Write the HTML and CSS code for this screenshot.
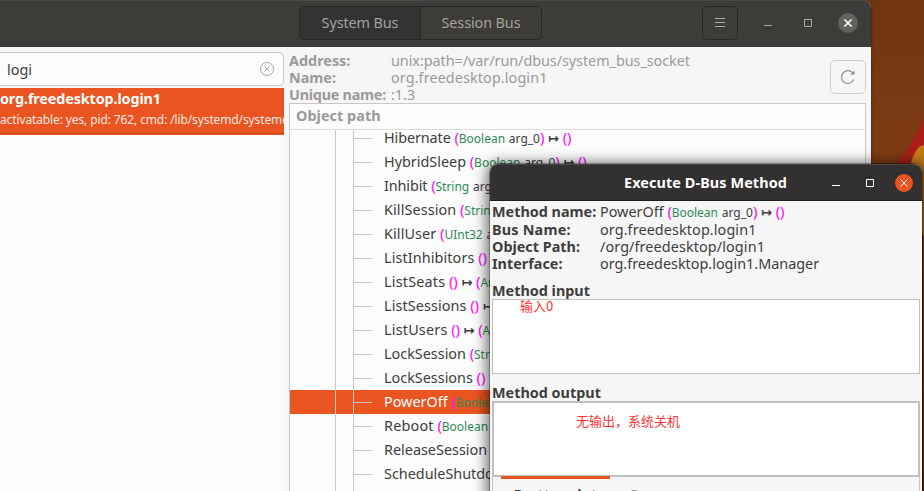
FILE: index.html
```html
<!DOCTYPE html>
<html lang="en">
<head>
<meta charset="utf-8">
<title>D-Feet</title>
<link rel="stylesheet" href="styles.css">
</head>
<body>
<svg class="wallpaper" viewBox="0 0 64 491" width="64" height="491">
  <path class="flame-red" d="M64 118C57 135 49 149 36 164L40 180H64Z"/>
  <path class="flame-gold" d="M64 145C57 146 54 153 51 163L49 176H64Z"/>
  <path class="flame-gap" d="M50 153L46 164H50Z"/>
  <path class="flame-gold" d="M62 160H64V235H62Z"/>
</svg>
<main class="window">
  <header class="titlebar">
    <div class="switcher"><span class="tab active">System Bus</span><span class="tab">Session Bus</span></div>
    <div class="controls">
      <span class="menu"><svg width="12" height="12"><path d="M1 1.5H11M1 5.5H11M1 9.5H11"/></svg></span>
      <svg class="min" width="10" height="10"><path d="M1 7.5H9"/></svg>
      <svg class="max" width="10" height="10"><path d="M1.5 1.5H8.5V8.5H1.5Z"/></svg>
      <span class="close"><svg width="10" height="10"><path d="M1.5 1.5L8.5 8.5M8.5 1.5L1.5 8.5"/></svg></span>
    </div>
  </header>
  <div class="content">
    <aside class="sidebar">
      <div class="search"><span>logi</span><svg width="16" height="16"><circle cx="8" cy="8" r="6.5"/><path d="M5.5 5.5L10.5 10.5M10.5 5.5L5.5 10.5"/></svg></div>
      <div class="service"><b>org.freedesktop.login1</b><small>activatable: yes, pid: 762, cmd: /lib/systemd/systemd</small></div>
      <div class="empty"></div>
    </aside>
    <section class="details">
      <div class="summary">
        <dl>
          <dt>Address:</dt><dd class="address">unix:path=/var/run/dbus/system_bus_socket</dd>
          <dt>Name:</dt><dd class="wide">org.freedesktop.login1</dd>
          <dt class="uniq">Unique name:</dt><dd>:1.3</dd>
        </dl>
        <span class="refresh"><svg width="18" height="18"><path d="M14 5.2A6.4 6.4 0 1 0 14.8 11.6"/><path class="head" d="M15.6 2.4V6.8H11.2Z"/></svg></span>
      </div>
      <div class="tree">
        <h2>Object path</h2>
        <ul>
          <li><span class="name snug">Hibernate</span> <i>(</i><em>Boolean</em> <small>arg_0</small><i>)</i> <s>↦</s> <i>()</i></li>
          <li><span class="name">HybridSleep</span> <i>(</i><em>Boolean</em> <small>arg_0</small><i>)</i> <s>↦</s> <i>()</i></li>
          <li><span class="name snug">Inhibit</span> <i>(</i><em>String</em> <small>arg_0</small></li>
          <li><span class="name wide">KillSession</span> <i>(</i><em>String</em></li>
          <li><span class="name wide">KillUser</span> <i>(</i><em>UInt32</em> <small>arg_0</small></li>
          <li><span class="name wide">ListInhibitors</span> <i>()</i></li>
          <li><span class="name wider">ListSeats</span> <i>()</i> <s>↦</s> <i>(</i><em>Array</em></li>
          <li><span class="name wide">ListSessions</span> <i>()</i> <s>↦</s></li>
          <li><span class="name wider">ListUsers</span> <i>()</i> <s>↦</s> <i>(</i><em>Array</em></li>
          <li><span class="name">LockSession</span> <i>(</i><em>String</em></li>
          <li><span class="name">LockSessions</span> <i>()</i></li>
          <li class="selected"><span class="name">PowerOff</span> <i>(</i><em>Boolean</em></li>
          <li><span class="name wider">Reboot</span> <i>(</i><em>Boolean</em></li>
          <li><span class="name">ReleaseSession</span></li>
          <li><span class="name">ScheduleShutdown</span></li>
          <li></li>
        </ul>
      </div>
    </section>
  </div>
</main>
<section class="dialog">
  <header class="dialog-bar">
    <h1>Execute D-Bus Method</h1>
    <svg class="d-min" width="10" height="10"><path d="M1 7.5H9"/></svg>
    <svg class="d-max" width="10" height="10"><path d="M1.5 1.5H8.5V8.5H1.5Z"/></svg>
    <span class="d-close"><svg width="10" height="10"><path d="M1.5 1.5L8.5 8.5M8.5 1.5L1.5 8.5"/></svg></span>
  </header>
  <dl>
    <dt>Method name:</dt><dd><span class="name">PowerOff</span> <i>(</i><em>Boolean</em> <small>arg_0</small><i>)</i> <s>↦</s> <i>()</i></dd>
    <dt class="wider">Bus Name:</dt><dd class="wide">org.freedesktop.login1</dd>
    <dt>Object Path:</dt><dd class="wide">/org/freedesktop/login1</dd>
    <dt>Interface:</dt><dd>org.freedesktop.login1.Manager</dd>
  </dl>
  <h3>Method input</h3>
  <div class="input">输入0</div>
  <h3 class="out">Method output</h3>
  <div class="output">无输出，系统关机</div>
  <div class="formats"><span class="current">Pretty print</span><span class="other">Source</span></div>
</section>
</body>
</html>
```
FILE: styles.css
```css
* { box-sizing: border-box; }
body { margin: 0; width: 924px; height: 491px; overflow: hidden; position: relative; background: linear-gradient(#70340f, #7e3c14 32%, #6c2f0c); font: 14.4px/17px "Noto Sans", sans-serif; color: #3d3d3d; }
h1, h2, h3, dl, dd, ul { margin: 0; padding: 0; }
svg { fill: none; stroke: #aaa9a6; display: block; }
.wide { letter-spacing: .1px; }
.wider { letter-spacing: .2px; }
.snug { letter-spacing: -.1px; }
.wallpaper { position: absolute; right: 0; top: 0; stroke: none; }
.flame-red { fill: #aa1e19; }
.flame-gold { fill: #c27a18; }
.flame-gap { fill: #7a3912; }
.window { width: 871px; height: 491px; background: #f6f6f6; border-radius: 0 8px 0 0; overflow: hidden; box-shadow: 0 0 3px #0008; position: relative; }
.titlebar { height: 47px; background: #3e3c39; border-top: 1px solid #4b4946; display: flex; justify-content: space-between; padding: 5px 13px 0 299px; }
.switcher { display: flex; height: 34px; border: 1px solid #272624; border-radius: 5px; overflow: hidden; color: #a4a29f; width: 243px; }
.tab { width: 120px; line-height: 32px; text-align: center; letter-spacing: -.1px; }
.tab.active { width: 121px; background: #333; border-right: 1px solid #272624; }
.controls { display: flex; height: 34px; align-items: center; }
.menu { width: 36px; height: 34px; border: 1px solid #272624; border-radius: 5px; display: grid; place-items: center; }
.min { margin-left: 25px; }
.max { margin: 0 25px 0 30px; }
.close { width: 20px; height: 20px; border-radius: 50%; background: #636261; display: grid; place-items: center; }
.close svg { stroke: #fff; stroke-width: 1.7; }
.content { display: flex; height: 444px; }
.sidebar { width: 284px; height: 444px; padding-top: 5px; overflow: hidden; }
.search { height: 34px; border: 1px solid #c9c8c7; border-left: 0; border-radius: 0 5px 5px 0; background: #fcfcfc; padding: 0 8px 0 7px; display: flex; align-items: center; justify-content: space-between; }
.service { margin-top: 2px; height: 47px; background: #e95420; color: #fff; border-bottom: 1px solid #e95420; box-shadow: inset 0 -1px #ca481c; padding-top: 2px; white-space: nowrap; overflow: hidden; }
.service b, .service small { display: block; }
.service b { letter-spacing: -.13px; }
.service small { font-size: 12px; line-height: 25px; letter-spacing: -.12px; color: #fde9e1; }
.empty { height: 356px; background: #fcfcfc; }
.details { width: 587px; padding: 5px 5px 0 5px; }
.summary { display: flex; justify-content: space-between; height: 51px; color: #9a9a9a; }
.summary dl { display: grid; grid-template-columns: 102px 310px; grid-auto-rows: 17px; white-space: nowrap; }
.address { letter-spacing: -.05px; }
dt { font-weight: 700; white-space: nowrap; }
.uniq { letter-spacing: -.25px; }
.refresh { width: 36px; height: 34px; margin-top: 8px; border: 1px solid #cecdcc; border-radius: 5px; display: grid; place-items: center; }
.refresh svg { stroke: #929292; stroke-width: 1.2; }
.refresh .head { fill: #929292; stroke: none; }
.tree { height: 400px; border: 1px solid #c9c8c7; background: #fcfcfc; }
h2 { height: 26px; border-bottom: 1px solid #dcdcdc; color: #999; font-size: 14.4px; line-height: 24px; padding-left: 6px; letter-spacing: .05px; }
ul { list-style: none; height: 372px; overflow: hidden; margin-top: -4px; clip-path: inset(4px 0 0 0); }
li { height: 24px; line-height: 24px; padding-left: 94px; white-space: nowrap; background: linear-gradient(#c8c8c8, #c8c8c8) 45px 0/1px 24px no-repeat, linear-gradient(#c8c8c8, #c8c8c8) 63px 0/1px 24px no-repeat, linear-gradient(#c8c8c8, #c8c8c8) 64px 12px/18px 1px no-repeat; }
li.selected { background-color: #e95420; color: #fff; }
i { font-style: normal; font-weight: 500; letter-spacing: -.2px; color: #ff19ff; }
em { font-style: normal; font-size: 12px; color: #2e8b57; }
small { font-size: 12px; }
s { text-decoration: none; font: bold 13px "DejaVu Sans", sans-serif; line-height: 1; }
.dialog { position: absolute; left: 490px; top: 164px; width: 432px; height: 340px; background: #f6f6f6; border-radius: 8px 8px 0 0; box-shadow: 0 2px 14px 3px #0009, 0 0 0 1px #0004; padding: 0 2px; }
.dialog-bar { height: 37px; margin: 0 -2px; background: #323030; border-top: 1px solid #484646; border-bottom: 1px solid #1e1d1d; border-radius: 8px 8px 0 0; display: flex; align-items: center; padding-right: 9px; }
h1 { width: 341px; padding-left: 134px; font-size: 14.4px; letter-spacing: .1px; color: #fff; white-space: nowrap; line-height: 34px; }
.dialog-bar svg { stroke: #fff; }
.d-max { margin: 0 20px 0 24px; }
.d-close { width: 18px; height: 18px; border-radius: 50%; background: #e95420; display: grid; place-items: center; }
.dialog dl { display: grid; grid-template-columns: 108px 1fr; grid-template-rows: 18px 17px 17px 17px; height: 81px; padding-top: 2px; white-space: nowrap; }
h3 { font-size: 14.4px; line-height: 17px; height: 17px; }
.input { width: 428px; height: 75px; background: #fff; border: 1px solid #c0c0c0; color: #f33; font: 13px/12px "Noto Sans CJK SC", sans-serif; padding-left: 27px; }
.out { margin-top: 10px; }
.output { width: 428px; height: 76px; background: #fff; border: 2px solid #c0c0c0; color: #f33; font: 13px/16px "Noto Sans CJK SC", sans-serif; padding: 10px 0 0 82px; }
.formats { width: 428px; height: 30px; border: 1px solid #c9c8c7; border-top: 0; margin-top: -1px; display: flex; font-weight: 700; white-space: nowrap; }
.formats span { width: 109px; height: 29px; padding-top: 7px; text-align: center; }
.formats .current { margin-left: 8px; border-top: 3px solid #e95420; }
.formats .other { padding: 10px 0 0 20px; text-align: left; color: #929292; }
```
